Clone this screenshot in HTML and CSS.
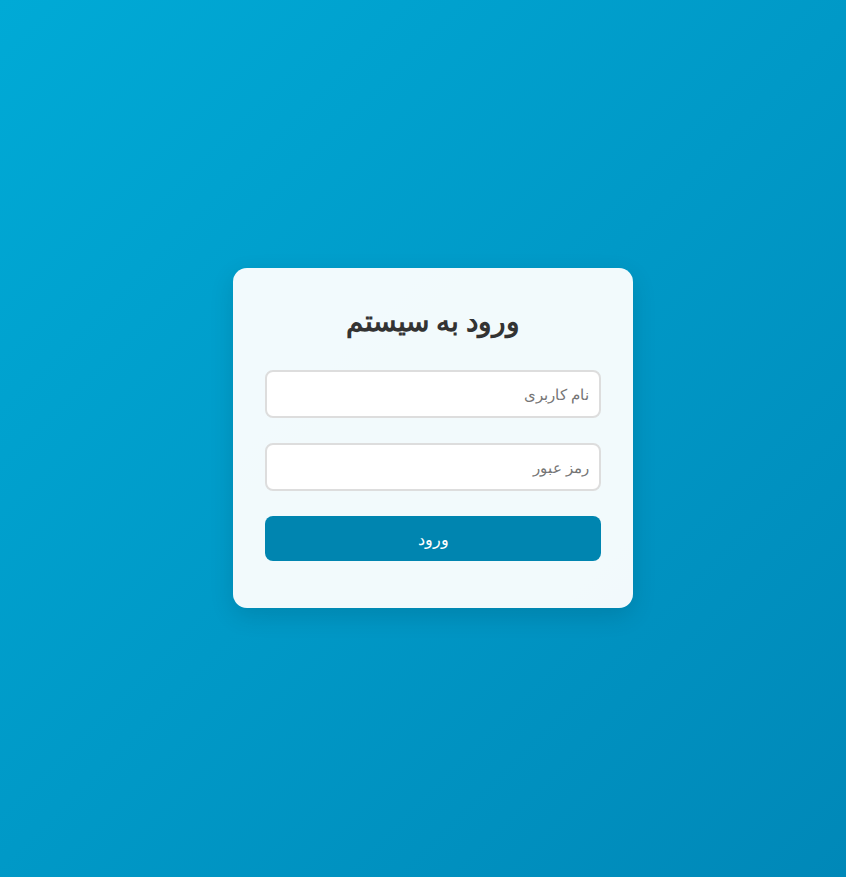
FILE: index.html
```html
<!DOCTYPE html>
<html lang="fa" dir="rtl">
<head>
<meta charset="utf-8">
<title>ورود به سیستم</title>
<link rel="stylesheet" href="styles.css">
</head>
<body>
<div class="login-card">
  <h2 class="title">ورود به سیستم</h2>
  <form class="login-form">
    <input class="field" type="text" placeholder="نام کاربری">
    <input class="field" type="password" placeholder="رمز عبور">
    <button class="submit" type="button">ورود</button>
  </form>
</div>
</body>
</html>
```
FILE: styles.css
```css
html, body {
  margin: 0;
  padding: 0;
  height: 100%;
}
body {
  box-sizing: border-box;
  font-family: "Noto Sans", sans-serif;
  background: linear-gradient(135deg, #00aad6 0%, #0088b8 100%);
  display: flex;
  align-items: center;
  justify-content: center;
  min-height: 877px;
  padding-left: 20px;
  padding-bottom: 1px;
}
.login-card {
  box-sizing: border-box;
  width: 400px;
  height: 340px;
  padding: 32px;
  background: rgba(255, 255, 255, 0.95);
  border-radius: 14px;
  box-shadow: 0 8px 24px rgba(0, 0, 0, 0.12);
}
.title {
  margin: 0 0 30px 0;
  text-align: center;
  font-size: 28px;
  font-weight: bold;
  color: #333;
  line-height: 40px;
}
.login-form {
  display: flex;
  flex-direction: column;
  gap: 25px;
}
.field {
  box-sizing: border-box;
  width: 100%;
  height: 48px;
  padding: 0 10px;
  border: 2px solid #ddd;
  border-radius: 8px;
  background: #fff;
  font-family: "Noto Sans", sans-serif;
  font-size: 15px;
  text-align: right;
  direction: rtl;
  outline: none;
}
.field::placeholder {
  color: #757575;
}
.submit {
  height: 45px;
  border: none;
  border-radius: 8px;
  background: #0085b0;
  color: #fff;
  font-family: "Noto Sans", sans-serif;
  font-size: 16px;
  cursor: pointer;
}
```
